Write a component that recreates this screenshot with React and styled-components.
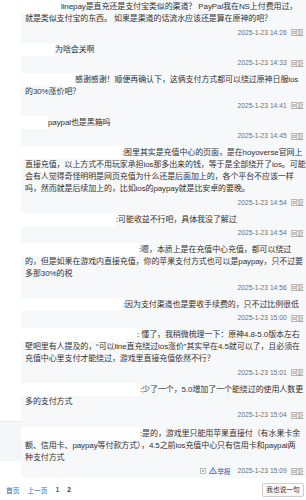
import React from "react";
import styled, { createGlobalStyle } from "styled-components";

const GlobalStyle = createGlobalStyle`
  html, body { margin: 0; padding: 0; background: #fff; }
  body {
    font-family: "Liberation Sans", Arial, "Noto Sans CJK SC", sans-serif;
    width: 306px; height: 500px; overflow: hidden;
  }
`;

const Page = styled.div`
  width: 306px;
  height: 500px;
  display: flex;
  flex-direction: column;
  overflow: hidden;
`;

const List = styled.div`
  display: flex;
  flex-direction: column;
`;

const Item = styled.div`
  display: flex;
  margin-top: ${(p) => (p.$active ? "-4.5px" : "0")};
`;

const Gutter = styled.div`
  flex: 0 0 21px;
  display: flex;
  flex-direction: column;
`;

const GutterMark = styled.div`
  height: 40px;
  box-sizing: border-box;
  background: #f5f6f8;
  border-top: 1px solid #e9eaec;
`;

const Body = styled.div`
  flex: 1;
  min-width: 0;
  background: #f7f8fa;
  padding: ${(p) => (p.$active ? "7px 2px 1px 4px" : "1px 2px 4.5px 4px")};
`;

const Content = styled.div`
  font-size: 8px;
  line-height: 12px;
  letter-spacing: -0.1px;
  color: #333;
  white-space: nowrap;
`;

const Name = styled.span`
  display: inline-block;
  vertical-align: top;
  width: ${(p) => p.$w}px;
  height: 13px;
  margin: -1px 0 0 -4px;
  background: #fff;
`;

const TimeRow = styled.div`
  margin-top: 1px;
  height: 12px;
  display: flex;
  justify-content: flex-end;
  align-items: center;
  gap: 4px;
  font-size: 6.7px;
  color: #6f6f6f;
`;

const ReplyLink = styled.span`
  color: #888;
`;

const Ops = styled.span`
  display: flex;
  align-items: center;
  gap: 3px;
  margin-right: 3px;
`;

const Report = styled.span`
  display: flex;
  align-items: center;
  color: #2d64b3;
`;

const Pager = styled.div`
  flex: 1;
  display: flex;
  align-items: center;
  justify-content: space-between;
  padding: 2px 2px 0 6px;
`;

const PageLinks = styled.div`
  display: flex;
  align-items: center;
  gap: 8px;
  font-size: 6.7px;
`;

const PageLink = styled.span`
  color: ${(p) => (p.$current ? "#333" : "#2d64b3")};
  font-weight: ${(p) => (p.$num ? "bold" : "normal")};
`;

const SayButton = styled.button`
  width: 42px;
  height: 14px;
  padding: 0;
  margin-top: 1px;
  box-sizing: border-box;
  border: 1px solid #cfcfcf;
  border-radius: 2px;
  background: linear-gradient(#ffffff, #f6f6f6);
  color: #333;
  font-family: inherit;
  font-size: 6.7px;
  line-height: 12px;
`;

const DropIcon = () => (
  <svg width="6" height="6" viewBox="0 0 6 6">
    <rect x="0.5" y="0.5" width="5" height="5" fill="#fff" stroke="#aaa" strokeWidth="0.8" />
    <path d="M1.6 2.4 L4.4 2.4 L3 3.9 Z" fill="#666" />
  </svg>
);

const WarnIcon = () => (
  <svg width="8" height="7" viewBox="0 0 8 7">
    <path d="M4 0.6 L7.5 6.5 L0.5 6.5 Z" fill="none" stroke="#2d64b3" strokeWidth="0.8" strokeLinejoin="round" />
    <path d="M4 2.5 L4 4.6" stroke="#2d64b3" strokeWidth="0.8" />
    <circle cx="4" cy="5.4" r="0.4" fill="#2d64b3" />
  </svg>
);

const replies = [
  {
    w: 40,
    lines: [
      "linepay是直充还是支付宝类似的渠道？ PayPal我在NS上付费用过，",
      "就是类似支付宝的东西。 如果是渠道的话流水应该还是算在原神的吧？",
    ],
    time: "2025-1-23 14:26",
  },
  { w: 34, lines: ["为啥会关啊"], time: "2025-1-23 14:33" },
  {
    w: 54,
    lines: ["感谢感谢！顺便再确认下，这俩支付方式都可以绕过原神日服ios", "的30%涨价吧？"],
    time: "2025-1-23 14:41",
  },
  { w: 27, lines: ["paypal也是黑箱吗"], time: "2025-1-23 14:45" },
  {
    w: 101,
    lines: [
      ":图里其实是充值中心的页面，是在hoyoverse官网上",
      "直接充值，以上方式不用玩家承担ios那多出来的钱，等于是全部绕开了ios。可能",
      "会有人觉得奇怪明明是网页充值为什么还是后面加上的，各个平台不应该一样",
      "吗，然而就是后续加上的，比如ios的paypay就是比安卓的要晚。",
    ],
    time: "2025-1-23 14:54",
  },
  { w: 95, lines: [":可能收益不行吧，具体我没了解过"], time: "2025-1-23 14:54" },
  {
    w: 118,
    lines: [
      ":嗯，本质上是在充值中心充值，都可以绕过",
      "的，但是如果在游戏内直接充值，你的苹果支付方式也可以是paypay，只不过要",
      "多那30%的税",
    ],
    time: "2025-1-23 14:56",
  },
  { w: 102, lines: [":因为支付渠道也是要收手续费的，只不过比例很低"], time: "2025-1-23 15:00" },
  {
    w: 116,
    lines: [
      ": 懂了，我稍微梳理一下：原神4.8-5.0版本左右",
      "壁吧里有人提及的，“可以line直充绕过ios涨价”其实早在4.5就可以了，且必须在",
      "充值中心里支付才能绕过，游戏里直接充值依然不行？",
    ],
    time: "2025-1-23 15:01",
  },
  {
    w: 119,
    lines: [":少了一个，5.0增加了一个能绕过的使用人数更", "多的支付方式"],
    time: "2025-1-23 15:04",
  },
  {
    w: 119,
    active: true,
    lines: [
      ":是的，游戏里只能用苹果直接付（有水果卡余",
      "额、信用卡、paypay等付款方式），4.5之前ios充值中心只有信用卡和paypal两",
      "种支付方式",
    ],
    time: "2025-1-23 15:09",
  },
];

export default function App() {
  return (
    <Page>
      <GlobalStyle />
      <List>
        {replies.map((r, i) => (
          <Item key={i} $active={r.active}>
            <Gutter>{r.active && <GutterMark />}</Gutter>
            <Body $active={r.active}>
              <Content>
                <Name $w={r.w} />
                {r.lines.map((l, j) => (
                  <React.Fragment key={j}>
                    {j > 0 && <br />}
                    {l}
                  </React.Fragment>
                ))}
              </Content>
              <TimeRow>
                {r.active && (
                  <Ops>
                    <DropIcon />
                    <Report>
                      <WarnIcon />
                      举报
                    </Report>
                  </Ops>
                )}
                <span>{r.time}</span>
                <ReplyLink>回复</ReplyLink>
              </TimeRow>
            </Body>
          </Item>
        ))}
      </List>
      <Pager>
        <PageLinks>
          <PageLink>首页</PageLink>
          <PageLink>上一页</PageLink>
          <PageLink $num>1</PageLink>
          <PageLink $num $current>2</PageLink>
        </PageLinks>
        <SayButton>我也说一句</SayButton>
      </Pager>
    </Page>
  );
}
